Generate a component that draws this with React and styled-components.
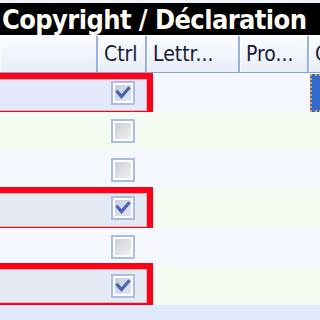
import React from "react";
import styled, { createGlobalStyle } from "styled-components";

const GlobalStyle = createGlobalStyle`
  html, body { margin: 0; padding: 0; background: #f5f9ff; overflow: hidden; }
  * { box-sizing: border-box; }
`;

const FONT = `"DejaVu Sans Condensed", "DejaVu Sans", Verdana, sans-serif`;

const Frame = styled.div`
  width: 320px;
  height: 320px;
  overflow: hidden;
  background: #eef2f9;
  padding-top: 3px;
  display: flex;
  flex-direction: column;
`;

const TitleBar = styled.div`
  height: 32px;
  background: #000;
  color: #fffdf6;
  font-family: ${FONT};
  font-stretch: condensed;
  font-weight: bold;
  font-size: 27px;
  letter-spacing: -0.6px;
  line-height: 33px;
  padding-left: 2px;
  white-space: nowrap;
  overflow: hidden;
  flex: none;
`;

const COLS = "98px 49px 93px 69px 60px";

const HeaderRow = styled.div`
  display: grid;
  grid-template-columns: ${COLS};
  height: 38px;
  border-top: 1px solid #ffffff;
  border-bottom: 1px solid #86a4d6;
  background: linear-gradient(#fafcff, #e7eef9);
  flex: none;
`;

const HeaderCell = styled.div`
  border-right: 2px solid #98b2df;
  box-shadow: inset 1px 0 0 #ffffff;
  font-family: ${FONT};
  font-stretch: condensed;
  font-size: 21px;
  color: #1a1a33;
  padding: 6px 0 0 6px;
  white-space: nowrap;
  overflow: hidden;
`;

const Body = styled.div`
  display: flex;
  flex-direction: column;
`;

const Row = styled.div`
  position: relative;
  display: grid;
  grid-template-columns: ${COLS};
  height: 38.7px;
  flex: none;
  background: ${(p) => p.$bg};
`;

const Cell = styled.div`
  display: flex;
  align-items: center;
  justify-content: ${(p) => (p.$center ? "center" : "flex-start")};
  background: ${(p) => p.$bg || "transparent"};
`;

const FocusCell = styled.div`
  margin: 1px 0 0 1px;
  width: 100%;
  height: 38px;
  background: #336bcd;
  border: 2px dotted #e8a640;
`;

const Mark = styled.div`
  position: absolute;
  left: -10px;
  width: 163px;
  top: ${(p) => p.$top}px;
  bottom: ${(p) => p.$bottom}px;
  border: 6px solid #ff0018;
  box-shadow: inset 0 0 0 1px #f2b4bf;
  pointer-events: none;
`;

const Box = styled.span`
  width: 24px;
  height: 24px;
  border: 2px solid #a9bee4;
  box-shadow: inset 0 0 0 2px #ffffff;
  background: ${(p) =>
    p.$checked
      ? "linear-gradient(135deg, #c4cae4 0%, #e6e9f6 100%)"
      : "linear-gradient(135deg, #c8c9d0 0%, #f6f6f8 100%)"};
  display: flex;
  align-items: center;
  justify-content: center;
  margin-left: 1px;
`;

const Check = ({ checked }) => (
  <Box $checked={checked}>
    {checked && (
      <svg width="16" height="16" viewBox="0 0 16 16">
        <path
          d="M2.5 7 L6.5 11.5 L13.5 3.5"
          fill="none"
          stroke="#4864ae"
          strokeWidth="3.2"
          strokeLinecap="square"
        />
      </svg>
    )}
  </Box>
);

const BLUE = "#f5f9ff";
const GREEN = "#f4fbf0";

const rows = [
  { bg: BLUE, checked: true, mark: { top: 0, bottom: -5 }, hl: "#e6e9f9", focus: true },
  { bg: GREEN, checked: false },
  { bg: BLUE, checked: false },
  { bg: GREEN, checked: true, mark: { top: -2, bottom: -5 }, hl: "#e4e9f4" },
  { bg: BLUE, checked: false },
  { bg: GREEN, checked: true, mark: { top: -3, bottom: -4 }, hl: "#e4e9f4" },
  { bg: "#e0ecfd", checked: null },
];

export default function App() {
  return (
    <>
      <GlobalStyle />
      <Frame>
        <TitleBar>Copyright / Déclaration</TitleBar>
        <HeaderRow>
          <HeaderCell />
          <HeaderCell>Ctrl</HeaderCell>
          <HeaderCell>Lettr...</HeaderCell>
          <HeaderCell>Pro...</HeaderCell>
          <HeaderCell>Co...</HeaderCell>
        </HeaderRow>
        <Body>
          {rows.map((r, i) => (
            <Row key={i} $bg={r.bg}>
              <Cell $bg={r.hl} />
              <Cell $bg={r.hl} $center>
                {r.checked !== null && <Check checked={r.checked} />}
              </Cell>
              <Cell />
              <Cell />
              <Cell>{r.focus && <FocusCell />}</Cell>
              {r.mark && <Mark $top={r.mark.top} $bottom={r.mark.bottom} />}
            </Row>
          ))}
        </Body>
      </Frame>
    </>
  );
}
